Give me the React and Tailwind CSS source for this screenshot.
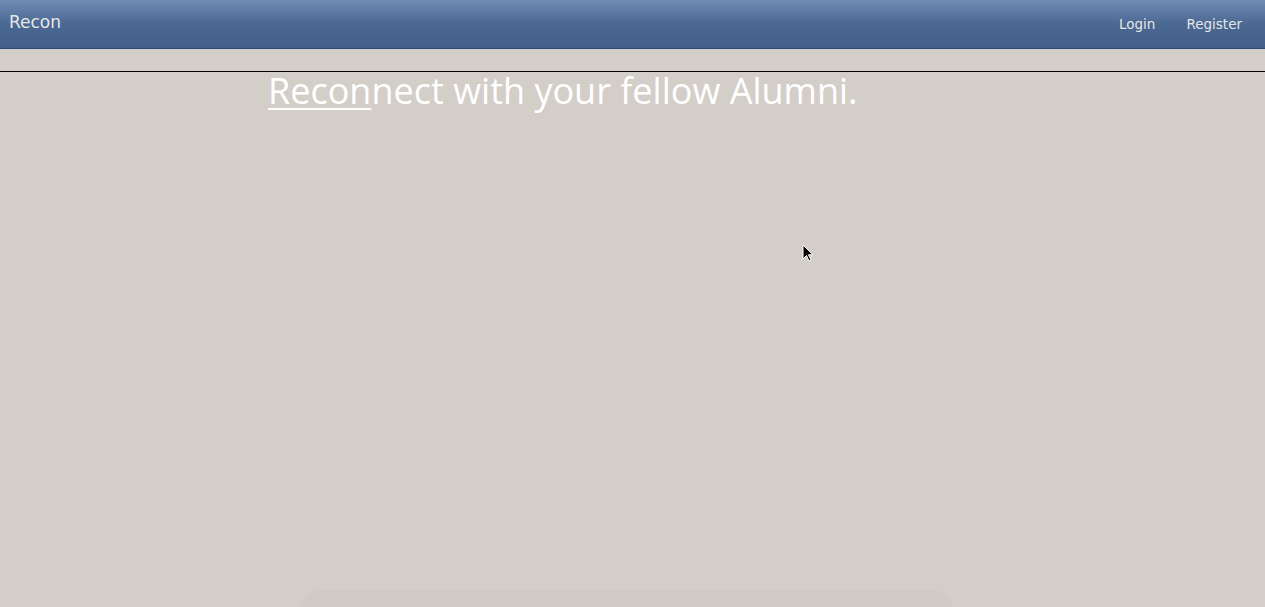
import React from "react";

function Navbar() {
  return (
    <div className="h-[49px] flex items-center justify-between bg-gradient-to-b from-[#6f8cb4] via-[#4a6892] to-[#42608a] border-b border-[#2f4a72] font-['DejaVu_Sans',sans-serif]">
      <span className="pl-[9px] text-[17px] text-[#e6e6e6] -mt-[2px]">Recon</span>
      <div className="flex items-center gap-[31px] pr-[23px] text-[13.5px] text-[#e6e6e6]">
        <a href="#" className="hover:text-white">Login</a>
        <a href="#" className="hover:text-white">Register</a>
      </div>
    </div>
  );
}

function Cursor() {
  return (
    <svg className="absolute left-[802px] top-[244px]" width="13" height="19" viewBox="0 0 13 19">
      <path d="M1 1 L1 15 L4.5 11.5 L7 17 L9 16 L6.5 10.8 L11 10.8 Z" fill="#000" stroke="#fff" strokeWidth="1" />
    </svg>
  );
}

export default function App() {
  return (
    <div className="relative min-h-[607px] bg-[#d3cec8] overflow-hidden">
      <Navbar />
      <div className="mt-[22px] border-t border-black">
        <h1 className="pl-[268px] pt-[1px] text-[36px] leading-[36px] text-white font-['Open_Sans',sans-serif]">
          <span className="underline decoration-2 underline-offset-[4px]">Recon</span>nect with your fellow Alumni.
        </h1>
      </div>
      <div className="absolute left-[300px] right-[312px] top-[590px] h-[40px] rounded-t-[20px] bg-[#d0cbc5]" />
      <Cursor />
    </div>
  );
}
